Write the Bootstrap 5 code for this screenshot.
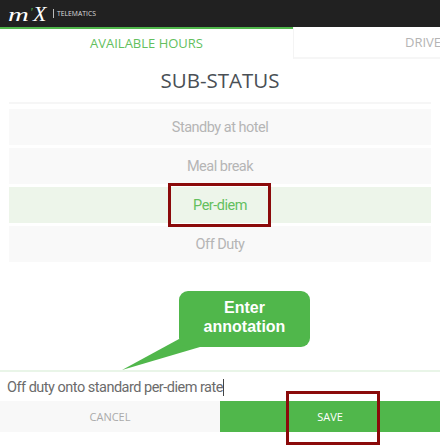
<!DOCTYPE html>
<html lang="en">
<head>
    <meta charset="UTF-8">
    <meta name="viewport" content="width=device-width, initial-scale=1.0">
    <title>Sub-status</title>
    <link href="https://cdn.jsdelivr.net/npm/bootstrap@5.3.0/dist/css/bootstrap.min.css" rel="stylesheet">
    <style>
        html, body {
            height: 445px;
            overflow: hidden;
        }

        body {
            position: relative;
            font-family: "Open Sans", "Noto Sans", sans-serif;
            background-color: #fff;
        }

        .top-header {
            height: 27px;
            background-color: #212121;
            padding-left: 8px;
        }

        .logo-mark {
            font-family: "Liberation Serif", serif;
            font-style: italic;
            color: #fff;
            line-height: 27px;
            width: 45px;
            white-space: nowrap;
        }

        .logo-m {
            display: inline-block;
            font-size: 18px;
            transform: scaleX(1.6);
            transform-origin: left center;
            width: 22px;
        }

        .logo-tick {
            display: inline-block;
            color: #50b74b;
            font-size: 12px;
            width: 3px;
            vertical-align: 5px;
        }

        .logo-x {
            font-size: 22px;
        }

        .logo-text {
            font-size: 6.8px;
            line-height: 9px;
            color: #ddd;
            border-left: 1px solid #bbb;
            padding-left: 3px;
            margin-left: 0;
        }

        .tab-row {
            height: 32px;
        }

        .tab-on {
            width: 293px;
            border-top: 2px solid #50b74b;
            color: #63bf5e;
            font-size: 13px;
            line-height: 28px;
            text-align: center;
        }

        .tab-off {
            flex: 1;
            border-left: 1px solid #f4f4f4;
            border-bottom: 2px solid #f6f6f6;
            color: #b4b4b4;
            font-size: 13px;
            line-height: 30px;
            padding-left: 111px;
            white-space: nowrap;
            overflow: hidden;
        }

        .sheet-title {
            font-size: 20.5px;
            line-height: 27px;
            font-weight: 400;
            color: #4a4f55;
            text-align: center;
            margin: 8px 0 8px;
        }

        .status-list {
            padding: 0 9px;
        }

        .status-rule {
            height: 2px;
            background-color: #f6f6f6;
            margin: 0 9px 5px;
        }

        .status-item {
            height: 36px;
            margin-bottom: 3px;
            background-color: #f9f9f9;
            color: #b5b5b5;
            font-family: Roboto, "Open Sans", sans-serif;
            font-size: 14.5px;
            letter-spacing: -0.5px;
            line-height: 38px;
            text-align: center;
        }

        .status-item.picked {
            background-color: #edf5ea;
            color: #63bf5e;
        }

        .note-box {
            margin-top: 108px;
            height: 31px;
            border-top: 2px solid #e9f5e8;
            padding-left: 7px;
            font-family: Roboto, "Open Sans", sans-serif;
            font-size: 14.5px;
            letter-spacing: -0.5px;
            line-height: 31px;
            color: #6b6b6b;
        }

        .caret-bar {
            display: inline-block;
            width: 1px;
            height: 17px;
            background-color: #444;
            vertical-align: -4px;
        }

        .action-row {
            height: 31px;
        }

        .action-btn {
            flex: 1;
            font-size: 11px;
            line-height: 31px;
            text-align: center;
        }

        .action-cancel {
            background-color: #f8f8f8;
            color: #aaa;
        }

        .action-save {
            background-color: #50b74b;
            color: #fff;
        }

        .red-frame {
            position: absolute;
            border: 3px solid #8b0a0a;
        }

        .frame-option {
            left: 168px;
            top: 183px;
            width: 103px;
            height: 44px;
        }

        .frame-save {
            left: 286px;
            top: 391px;
            width: 94px;
            height: 54px;
        }

        .callout-tail {
            position: absolute;
            left: 120px;
            top: 330px;
            width: 90px;
            height: 42px;
        }

        .callout-box {
            position: absolute;
            left: 179px;
            top: 291px;
            width: 131px;
            height: 56px;
            border-radius: 9px;
            background-color: #50b74b;
            color: #fff;
            font-family: "Liberation Sans", Arial, sans-serif;
            font-weight: 700;
            font-size: 16px;
            line-height: 19px;
            text-align: center;
            padding-top: 7px;
        }
    </style>
</head>
<body>
    <!-- Header -->
    <div class="top-header d-flex align-items-center">
        <div class="logo-mark"><span class="logo-m">m</span><span class="logo-tick">'</span><span class="logo-x">X</span></div>
        <div class="logo-text">TELEMATICS</div>
    </div>

    <!-- Tabs -->
    <div class="tab-row d-flex">
        <div class="tab-on">AVAILABLE HOURS</div>
        <div class="tab-off">DRIVE</div>
    </div>

    <h1 class="sheet-title">SUB-STATUS</h1>
    <div class="status-rule"></div>

    <div class="status-list">
        <div class="status-item">Standby at hotel</div>
        <div class="status-item">Meal break</div>
        <div class="status-item picked">Per-diem</div>
        <div class="status-item">Off Duty</div>
    </div>

    <!-- Annotation -->
    <div class="note-box">Off duty onto standard per-diem rate<span class="caret-bar"></span></div>
    <div class="action-row d-flex">
        <div class="action-btn action-cancel">CANCEL</div>
        <div class="action-btn action-save">SAVE</div>
    </div>

    <!-- Overlays -->
    <svg class="callout-tail" viewBox="0 0 90 42">
        <polygon points="59,9 80,17 2,40" fill="#50b74b"></polygon>
    </svg>
    <div class="callout-box">Enter<br>annotation</div>
    <div class="red-frame frame-option"></div>
    <div class="red-frame frame-save"></div>

    <script src="https://cdn.jsdelivr.net/npm/bootstrap@5.3.0/dist/js/bootstrap.bundle.min.js"></script>
</body>
</html>
